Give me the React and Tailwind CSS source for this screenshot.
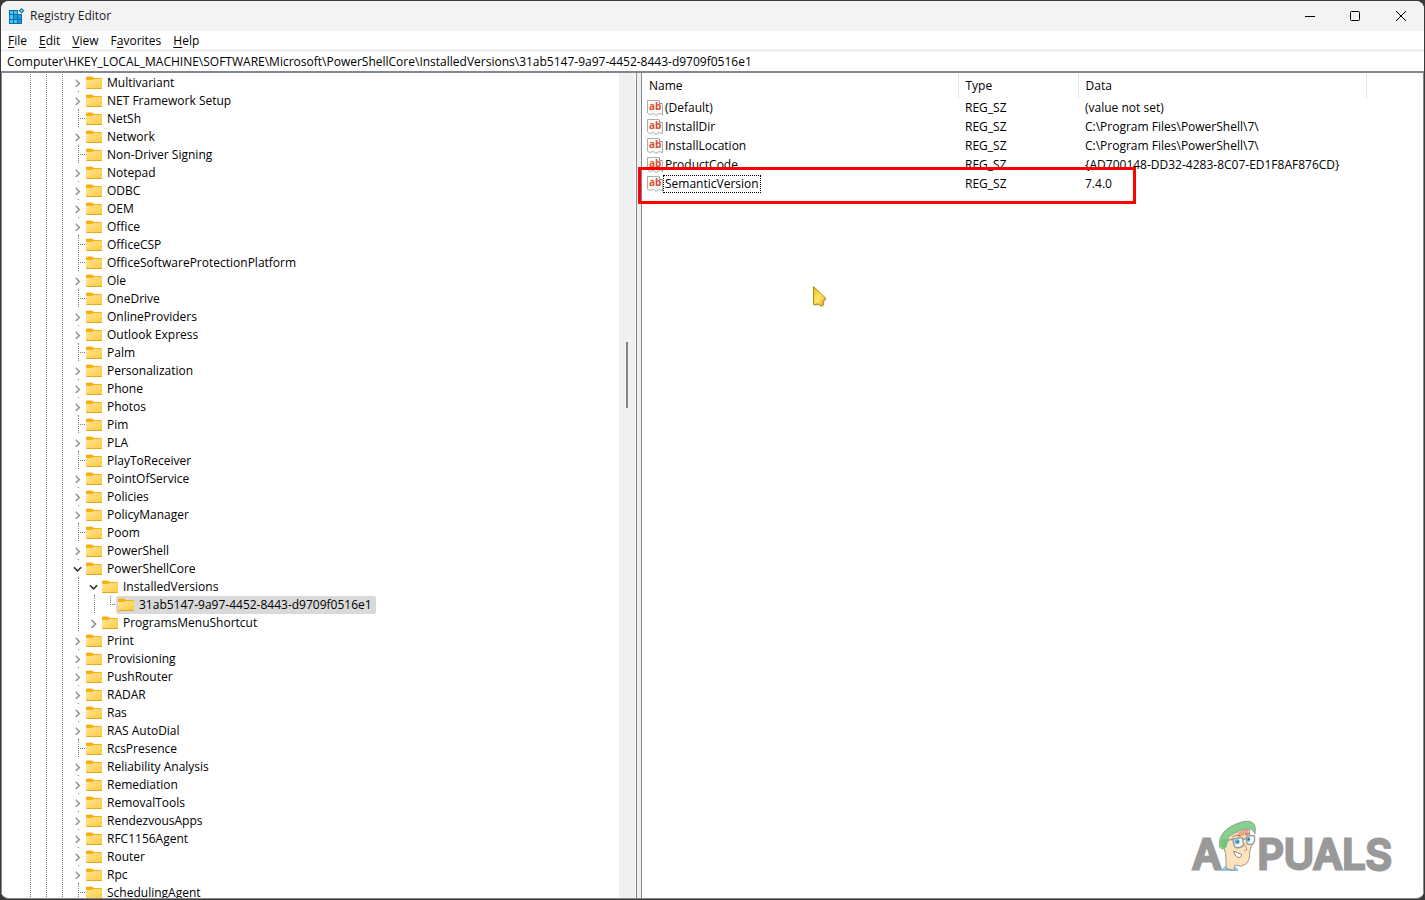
import clsx from 'clsx';

const MENU = [
  { before: '', key: 'F', after: 'ile' },
  { before: '', key: 'E', after: 'dit' },
  { before: '', key: 'V', after: 'iew' },
  { before: 'F', key: 'a', after: 'vorites' },
  { before: '', key: 'H', after: 'elp' },
];

// state: 'closed' and 'open' get a chevron, 'leaf' gets a dotted branch
const KEYS = [
  { name: 'Multivariant', state: 'closed' },
  { name: 'NET Framework Setup', state: 'closed' },
  { name: 'NetSh', state: 'leaf' },
  { name: 'Network', state: 'closed' },
  { name: 'Non-Driver Signing', state: 'leaf' },
  { name: 'Notepad', state: 'closed' },
  { name: 'ODBC', state: 'closed' },
  { name: 'OEM', state: 'closed' },
  { name: 'Office', state: 'closed' },
  { name: 'OfficeCSP', state: 'leaf' },
  { name: 'OfficeSoftwareProtectionPlatform', state: 'leaf' },
  { name: 'Ole', state: 'closed' },
  { name: 'OneDrive', state: 'leaf' },
  { name: 'OnlineProviders', state: 'closed' },
  { name: 'Outlook Express', state: 'closed' },
  { name: 'Palm', state: 'leaf' },
  { name: 'Personalization', state: 'closed' },
  { name: 'Phone', state: 'closed' },
  { name: 'Photos', state: 'closed' },
  { name: 'Pim', state: 'leaf' },
  { name: 'PLA', state: 'closed' },
  { name: 'PlayToReceiver', state: 'leaf' },
  { name: 'PointOfService', state: 'closed' },
  { name: 'Policies', state: 'closed' },
  { name: 'PolicyManager', state: 'closed' },
  { name: 'Poom', state: 'leaf' },
  { name: 'PowerShell', state: 'closed' },
  { name: 'PowerShellCore', state: 'open' },
  { name: 'InstalledVersions', state: 'open', depth: 1 },
  {
    name: '31ab5147-9a97-4452-8443-d9709f0516e1',
    state: 'leaf',
    depth: 2,
    last: true,
    selected: true,
  },
  { name: 'ProgramsMenuShortcut', state: 'closed', depth: 1, last: true },
  { name: 'Print', state: 'closed' },
  { name: 'Provisioning', state: 'closed' },
  { name: 'PushRouter', state: 'closed' },
  { name: 'RADAR', state: 'closed' },
  { name: 'Ras', state: 'closed' },
  { name: 'RAS AutoDial', state: 'closed' },
  { name: 'RcsPresence', state: 'leaf' },
  { name: 'Reliability Analysis', state: 'closed' },
  { name: 'Remediation', state: 'closed' },
  { name: 'RemovalTools', state: 'closed' },
  { name: 'RendezvousApps', state: 'closed' },
  { name: 'RFC1156Agent', state: 'closed' },
  { name: 'Router', state: 'closed' },
  { name: 'Rpc', state: 'closed' },
  { name: 'SchedulingAgent', state: 'leaf' },
];

const VALUES = [
  { name: '(Default)', type: 'REG_SZ', data: '(value not set)' },
  { name: 'InstallDir', type: 'REG_SZ', data: 'C:\\Program Files\\PowerShell\\7\\' },
  { name: 'InstallLocation', type: 'REG_SZ', data: 'C:\\Program Files\\PowerShell\\7\\' },
  { name: 'ProductCode', type: 'REG_SZ', data: '{AD700148-DD32-4283-8C07-ED1F8AF876CD}' },
  { name: 'SemanticVersion', type: 'REG_SZ', data: '7.4.0', focused: true },
];

function RegeditIcon() {
  return (
    <svg width="17" height="16" viewBox="0 0 17 16" className="shrink-0" aria-hidden="true">
      <path d="M1 2h9v4h4v10H1z" fill="#0a6ea8" />
      <path d="M2 3h3v3H2zM6 3h3v3H6zM2 7h3v4H2zM2 12h3v3H2zM6 12h3v3H6z" fill="#44c8f9" />
      <path d="M6 7h3v4H6zM10 7h3v4h-3zM10 12h3v3h-3z" fill="#1b9bdc" />
      <path d="M13.5 0l3 2.7-3 2.8-3-2.8z" fill="#1272a8" />
      <path d="M13.5 1.4L15 2.7l-1.5 1.4L12 2.7z" fill="#6fd6fb" />
    </svg>
  );
}

function FolderIcon() {
  return (
    <svg width="16" height="14" viewBox="0 0 16 14" className="shrink-0" aria-hidden="true">
      <defs>
        <linearGradient id="folder" x1="0" y1="0" x2="1" y2="1">
          <stop offset="0" stopColor="#ffe596" />
          <stop offset="1" stopColor="#ffca3d" />
        </linearGradient>
      </defs>
      <path d="M0 1.5Q0 .5 1 .5h5L8 2h7q1 0 1 1v9H0z" fill="#f5b014" />
      <path d="M0 4h6l2-1h7q1 0 1 1v8q0 1-1 1H1q-1 0-1-1z" fill="url(#folder)" />
      <path d="M0 12h16q0 1-1 1H1q-1 0-1-1z" fill="#e2a61f" />
    </svg>
  );
}

function StringIcon() {
  return (
    <svg width="16" height="16" viewBox="0 0 16 16" className="shrink-0" aria-hidden="true">
      <path
        d="M.5.5h11l1.5 2 2.5 2v10.5l-2-1.5-2.5.5-2 1.5-2.5-2-2 .5-2 .5-2-1.5z"
        fill="#fcfcfc"
        stroke="#adadad"
      />
      <path d="M12.5.5v3h3" fill="#fff" stroke="#8f8f8f" />
      <text x="2" y="10" fontSize="10" fontWeight="700" fill="#d9502f">
        ab
      </text>
    </svg>
  );
}

function Chevron({ open }) {
  return (
    <svg width="10" height="10" viewBox="0 0 10 10" aria-hidden="true">
      {open ? (
        <path d="M.5 3.5l4 4 4-4" fill="none" stroke="#303030" strokeWidth="1.7" />
      ) : (
        <path d="M2.5 2l4 4-4 4" fill="none" stroke="#969696" strokeWidth="1.7" />
      )}
    </svg>
  );
}

function VDots({ className }) {
  return (
    <span
      className={clsx(
        'w-px bg-[repeating-linear-gradient(to_bottom,#808080_0_1px,transparent_1px_2px)]',
        className
      )}
    />
  );
}

function Guide() {
  return (
    <span className="flex w-4 shrink-0 justify-end pr-[7px]">
      <VDots className="h-full" />
    </span>
  );
}

function Branch({ state, last }) {
  if (state === 'leaf') {
    return (
      <span className="flex w-4 shrink-0 justify-end">
        <VDots className={last ? 'h-[9px]' : 'h-full'} />
        <span className="mt-2 h-px w-[7px] bg-[repeating-linear-gradient(to_right,transparent_0_1px,#808080_1px_2px)]" />
      </span>
    );
  }
  return (
    <button
      type="button"
      aria-label={state === 'open' ? 'Collapse' : 'Expand'}
      className="flex w-4 shrink-0 flex-col items-center pt-1"
    >
      <Chevron open={state === 'open'} />
      {!last && <VDots className="ml-px mt-1 h-px" />}
    </button>
  );
}

function TreeRow({ item }) {
  const { name, state, depth = 0, last, selected } = item;
  return (
    <li className="flex h-[18px] pl-5">
      {Array.from({ length: depth + 3 }, (_, i) => (
        <Guide key={i} />
      ))}
      <Branch state={state} last={last} />
      <span
        className={clsx(
          '-ml-0.5 flex items-center gap-[5px] whitespace-nowrap pl-0.5 pr-1',
          selected && 'rounded-xs bg-[#d9d9d9]'
        )}
      >
        <FolderIcon />
        {name}
      </span>
    </li>
  );
}

function TitleBar() {
  const button = 'flex h-full w-[46px] items-center justify-center';
  return (
    <header className="flex h-[30px] shrink-0 items-center bg-[#f3f3f3] pl-[7px]">
      <RegeditIcon />
      <h1 className="flex-1 pl-[5px] text-[#1b1b1b]">Registry Editor</h1>
      <div className="flex h-full">
        <button type="button" aria-label="Minimize" className={button}>
          <svg width="11" height="11" viewBox="0 0 11 11">
            <path d="M1 5.5h10" stroke="#000" />
          </svg>
        </button>
        <button type="button" aria-label="Maximize" className={button}>
          <svg width="11" height="11" viewBox="0 0 11 11">
            <rect x=".5" y=".5" width="9" height="9" rx="1" fill="none" stroke="#000" />
          </svg>
        </button>
        <button type="button" aria-label="Close" className={button}>
          <svg width="11" height="11" viewBox="0 0 11 11">
            <path d="M0 0l10 10M10 0L0 10" stroke="#000" />
          </svg>
        </button>
      </div>
    </header>
  );
}

function MenuBar() {
  return (
    <nav className="flex h-[18px] shrink-0 items-center gap-3 pl-[7px] pt-[2px]">
      {MENU.map((item) => (
        <button key={item.key} type="button">
          {item.before}
          <span className="underline underline-offset-2">{item.key}</span>
          {item.after}
        </button>
      ))}
    </nav>
  );
}

function ValueTable() {
  return (
    <table className="w-full table-fixed border-collapse text-left">
      <colgroup>
        <col className="w-[316px]" />
        <col className="w-[120px]" />
        <col className="w-[288px]" />
        <col />
      </colgroup>
      <thead>
        <tr className="h-6">
          <th className="border-r border-[#e5e5e5] pl-[7px] font-normal">Name</th>
          <th className="border-r border-[#e5e5e5] pl-[7px] font-normal">Type</th>
          <th className="border-r border-[#e5e5e5] pl-[7px] font-normal">Data</th>
          <td />
        </tr>
      </thead>
      <tbody>
        {VALUES.map((value) => (
          <tr key={value.name} className="h-[19px]">
            <td className="p-0 pl-[5px]">
              <span className="flex h-[19px] items-center">
                <StringIcon />
                <span
                  className={clsx(
                    'border px-px leading-4',
                    value.focused ? 'border-dotted border-black' : 'border-transparent'
                  )}
                >
                  {value.name}
                </span>
              </span>
            </td>
            <td className="p-0 pl-[7px]">{value.type}</td>
            <td className="whitespace-nowrap p-0 pl-[7px]">{value.data}</td>
            <td />
          </tr>
        ))}
      </tbody>
    </table>
  );
}

function Pointer() {
  return (
    <svg
      width="16"
      height="24"
      viewBox="0 0 16 24"
      className="absolute left-[170px] top-[212px]"
      aria-hidden="true"
    >
      <defs>
        <linearGradient id="pointer" x1="0" y1="0" x2="1" y2="1">
          <stop offset="0" stopColor="#e9b90f" />
          <stop offset=".5" stopColor="#ffe46b" />
          <stop offset="1" stopColor="#e2ac10" />
        </linearGradient>
      </defs>
      <path d="M2 3l13 11-3 4-1 4-4-2-5 1z" fill="#000" opacity=".2" />
      <path
        d="M1.5 1.5l12 11.5-2.5 3.5.5 3.5-2.5 1-3-2-4.5.5z"
        fill="url(#pointer)"
        stroke="#b58a12"
        strokeLinejoin="round"
      />
    </svg>
  );
}

function Mascot() {
  return (
    <svg width="38" height="52" viewBox="130 58 114 156" aria-hidden="true">
      <path d="M138 214q2-14 16-14l20 2q12 0 14 12z" fill="#86c5e6" />
      <path
        d="M144 144l6 18 2 44 22 6 4-16q18 8 32-2 14-14 12-38l6-20-8-46-36-4-40 22z"
        fill="#fbe3be"
        stroke="#a0978c"
        strokeWidth="3"
        strokeLinejoin="round"
      />
      <path d="M188 98l28-10 4 22-12-4-22 8z" fill="#eba585" />
      <path
        d="M133 118q6-22 34-38 30-17 54-15 17 4 18 22l-1 16q-4-12-14-15-30-2-66 24-2 18-8 30l-10 6q-10-4-10-14z"
        fill="#86cf8c"
        stroke="#96a096"
        strokeWidth="3"
        strokeLinejoin="round"
      />
      <path d="M138 120q12-6 16 2l-3 22-8 4q-9-8-5-28z" fill="#6dc876" />
      <g fill="#f4f7f8" stroke="#999" strokeWidth="4" strokeLinejoin="round">
        <path d="M172 118l28-4 4 22q-8 10-22 8-10-4-10-26z" />
        <path d="M212 110l24-3q4 24-8 28l-14-2z" />
        <path d="M156 122l16-4M202 120l10-4" fill="none" />
      </g>
      <ellipse cx="184" cy="126" rx="8" ry="7" fill="#5fb6d4" />
      <ellipse cx="218" cy="119" rx="6" ry="7" fill="#5fb6d4" />
      <circle cx="186" cy="126" r="3" fill="#49636d" />
      <circle cx="219" cy="119" r="3" fill="#49636d" />
      <path d="M170 112q12-9 24-4M208 104l12-3" fill="none" stroke="#a5765a" strokeWidth="3" />
      <path d="M206 134l8 16-9 4" fill="none" stroke="#c19c7a" strokeWidth="3" />
      <path
        d="M174 154q14 8 24 10-2 12-12 9-10-5-12-19z"
        fill="#fff"
        stroke="#9a8577"
        strokeWidth="3"
      />
    </svg>
  );
}

function Watermark() {
  return (
    <div className="pointer-events-none absolute bottom-[27px] right-[31px] flex items-end font-['Inter'] text-[41px] font-medium leading-[34px] text-[#999] [-webkit-text-stroke:3px_#999] [stroke-linejoin:round]">
      <span>A</span>
      <span className="-ml-0.5">
        <Mascot />
      </span>
      <span>PUALS</span>
    </div>
  );
}

export default function App() {
  return (
    <div className="h-screen bg-[#3b3a38] p-px font-['Open_Sans',sans-serif] text-[12px] leading-4 text-black">
      <div className="flex h-full flex-col overflow-hidden rounded-lg border-b border-[#828790] bg-white">
        <TitleBar />
        <MenuBar />
        <div className="shrink-0 border-b-2 border-t-[3px] border-b-[#828790] border-t-[#f0f0f0]">
          <input
            type="text"
            aria-label="Address"
            className="block h-[19px] w-full pl-[6px] outline-none"
            defaultValue="Computer\HKEY_LOCAL_MACHINE\SOFTWARE\Microsoft\PowerShellCore\InstalledVersions\31ab5147-9a97-4452-8443-d9709f0516e1"
          />
        </div>
        <main className="grid min-h-0 flex-1 grid-cols-[636fr_4px_783fr]">
          <section className="flex min-h-0 overflow-hidden border-x border-[#828790]">
            <ul className="min-w-0 flex-1 pt-px">
              {KEYS.map((item) => (
                <TreeRow key={item.name} item={item} />
              ))}
            </ul>
            <div className="w-4 bg-[#f0f0f0] pl-[7px] pt-[269px]">
              <div className="h-[66px] w-[2px] bg-[#858585]" />
            </div>
            <div className="w-px" />
          </section>
          <div className="bg-[#f0f0f0]" />
          <section className="relative min-h-0 border-x border-[#828790] pt-px">
            <ValueTable />
            <div className="absolute -left-1 top-[94px] h-[37px] w-[498px] border-3 border-[#ff0000]" />
            <Pointer />
            <Watermark />
          </section>
        </main>
      </div>
    </div>
  );
}
